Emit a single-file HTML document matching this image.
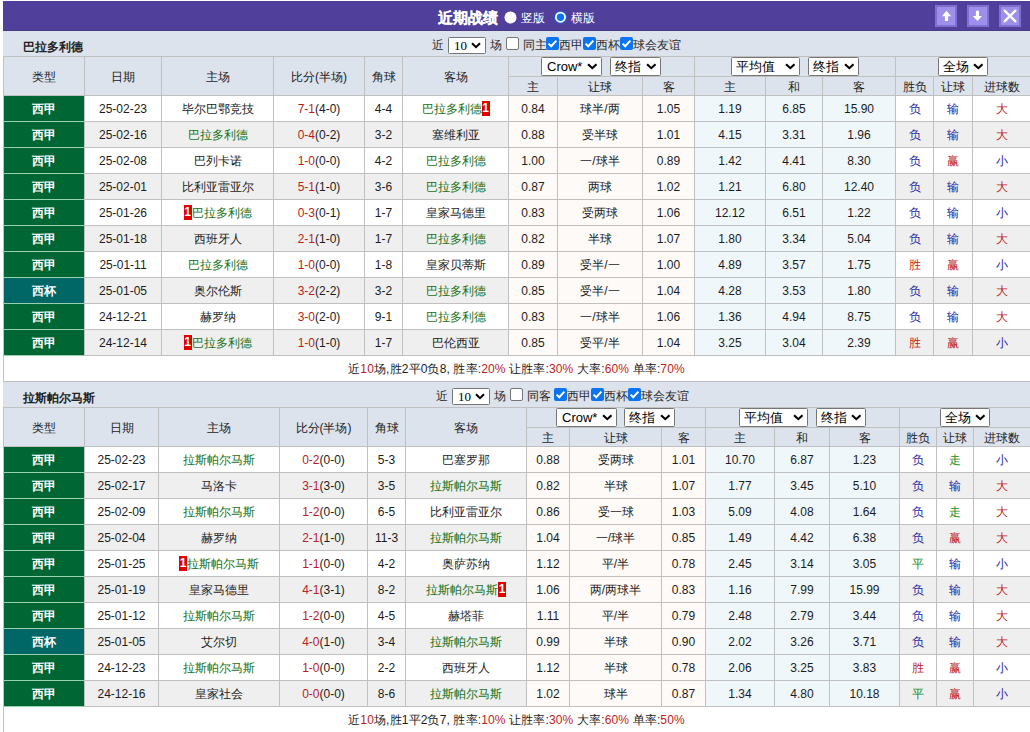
<!DOCTYPE html><html><head><meta charset="utf-8"><style>
*{margin:0;padding:0;box-sizing:content-box}
html,body{width:1030px;height:732px;overflow:hidden;background:#fff}
body{position:relative;font-family:"Liberation Sans",sans-serif;font-size:12px;color:#333}
.a{position:absolute}
.t{text-align:center;white-space:nowrap;overflow:visible}
.sel{background:#fff;border:1px solid #767676;border-radius:1.5px;color:#000;white-space:nowrap}
.sel .sl{position:absolute;left:5px;top:0}
.chev{position:absolute}
.cb{width:11px;height:11px;border:1px solid #767676;border-radius:2px;background:#fff}
.cb.on{width:13px;height:13px;border:none;background:#0b74f0}
.cb svg{position:absolute;left:0;top:0}
.btn{width:18px;height:18px;border:2px solid #7e6fd0;background:#9f8fec}
.rc{display:inline-block;position:relative;top:-1px;background:#e00000;color:#fff;font-weight:bold;width:8px;height:15px;line-height:15px;text-align:center;vertical-align:middle;font-size:12px}
</style></head><body><div class="a" style="left:3px;top:1px;width:1027px;height:30px;background:#51409b;"></div>
<div class="a" style="left:3px;top:30px;width:1027px;height:1px;background:#4a3c82;"></div>
<div class="a" style="left:3px;top:31px;width:1027px;height:1px;background:#e3e5f7;"></div>
<div class="a t" style="text-align:left;left:438px;top:2.5px;width:80px;height:30px;line-height:30px;font-size:15px;font-weight:bold;color:#fff;-webkit-text-stroke:0.2px #fff;">近期战绩</div>
<svg class="a" style="left:500px;top:8px" width="20" height="20" viewBox="0 0 20 20"><circle cx="10.5" cy="9.5" r="6" fill="#fff"/></svg>
<div class="a t" style="text-align:left;left:521px;top:2.5px;width:40px;height:30px;line-height:30px;font-size:12px;color:#fff;">竖版</div>
<svg class="a" style="left:550px;top:8px" width="20" height="20" viewBox="0 0 20 20"><circle cx="10.5" cy="9.2" r="6.4" fill="#1e5fd8"/><circle cx="10.5" cy="9.2" r="5.5" fill="#fff"/><circle cx="10.5" cy="9.2" r="3.7" fill="#0a74f5"/></svg>
<div class="a t" style="text-align:left;left:571px;top:2.5px;width:40px;height:30px;line-height:30px;font-size:12px;color:#fff;">横版</div>
<div class="a btn" style="left:935px;top:5px;"></div>
<div class="a btn" style="left:967px;top:5px;"></div>
<div class="a btn" style="left:999px;top:5px;"></div>
<svg class="a" style="left:935px;top:5px" width="22" height="22" viewBox="0 0 22 22"><path d="M6.9 11.3 L11.5 5.7 L16.1 11.3 L13.1 11.3 L13.1 16.1 L9.9 16.1 L9.9 11.3 Z" fill="#fff"/></svg>
<svg class="a" style="left:967px;top:5px" width="22" height="22" viewBox="0 0 22 22"><path d="M5.8 10.9 L10.4 16.1 L15 10.9 L12 10.9 L12 5.7 L8.9 5.7 L8.9 10.9 Z" fill="#fff"/></svg>
<svg class="a" style="left:999px;top:5px" width="22" height="22" viewBox="0 0 22 22"><path d="M5.6 5.6 L16.4 16.4 M16.4 5.6 L5.6 16.4" stroke="#fff" stroke-width="2.3" stroke-linecap="round"/></svg>
<div class="a" style="left:3px;top:31px;width:1027px;height:25px;background:#dce3ed;"></div>
<div class="a t" style="text-align:left;left:22.5px;top:35px;width:200px;height:25px;line-height:25px;font-size:12px;font-weight:bold;color:#222;">巴拉多利德</div>
<div class="a t" style="text-align:left;left:432px;top:31px;width:14px;height:25px;line-height:25px;font-size:12px;color:#2a2a2a;padding-top:3px;line-height:22px">近</div>
<div class="a sel" style="left:448px;top:37px;width:36px;height:15px;line-height:15px;font-size:13px;"><span class="sl" style="left:5px;top:0px;font-family:'Liberation Serif',serif;">10</span><svg class="chev" width="10" height="7" viewBox="0 0 10 7" preserveAspectRatio="none" style="right:4px;top:4.0px"><path d="M1 1.2 L5 5.2 L9 1.2" fill="none" stroke="#000" stroke-width="2"/></svg></div>
<div class="a t" style="text-align:left;left:490px;top:31px;width:14px;height:25px;line-height:25px;font-size:12px;color:#2a2a2a;padding-top:3px;line-height:22px">场</div>
<div class="a cb" style="left:506px;top:37px"></div>
<div class="a t" style="text-align:left;left:523px;top:31px;width:30px;height:25px;line-height:25px;font-size:12px;color:#2a2a2a;padding-top:3px;line-height:22px">同主</div>
<div class="a cb on" style="left:546px;top:37px"><svg width="13" height="13" viewBox="0 0 13 13"><path d="M2.6 6.6 L5.2 9.2 L10.4 3.6" fill="none" stroke="#fff" stroke-width="2"/></svg></div>
<div class="a t" style="text-align:left;left:559px;top:31px;width:30px;height:25px;line-height:25px;font-size:12px;color:#2a2a2a;padding-top:3px;line-height:22px">西甲</div>
<div class="a cb on" style="left:583px;top:37px"><svg width="13" height="13" viewBox="0 0 13 13"><path d="M2.6 6.6 L5.2 9.2 L10.4 3.6" fill="none" stroke="#fff" stroke-width="2"/></svg></div>
<div class="a t" style="text-align:left;left:596px;top:31px;width:30px;height:25px;line-height:25px;font-size:12px;color:#2a2a2a;padding-top:3px;line-height:22px">西杯</div>
<div class="a cb on" style="left:620px;top:37px"><svg width="13" height="13" viewBox="0 0 13 13"><path d="M2.6 6.6 L5.2 9.2 L10.4 3.6" fill="none" stroke="#fff" stroke-width="2"/></svg></div>
<div class="a t" style="text-align:left;left:633px;top:31px;width:60px;height:25px;line-height:25px;font-size:12px;color:#2a2a2a;padding-top:3px;line-height:22px">球会友谊</div>
<div class="a" style="left:3px;top:56px;width:1028px;height:326px;background:#c0c0c0;"></div>
<div class="a" style="left:4px;top:57px;width:80px;height:38px;background:#dce3ed;"></div>
<div class="a t" style="left:4px;top:58px;width:80px;height:38px;line-height:38px;color:#1c1c1c;">类型</div>
<div class="a" style="left:85px;top:57px;width:76px;height:38px;background:#dce3ed;"></div>
<div class="a t" style="left:85px;top:58px;width:76px;height:38px;line-height:38px;color:#1c1c1c;">日期</div>
<div class="a" style="left:162px;top:57px;width:111px;height:38px;background:#dce3ed;"></div>
<div class="a t" style="left:162px;top:58px;width:111px;height:38px;line-height:38px;color:#1c1c1c;">主场</div>
<div class="a" style="left:274px;top:57px;width:90px;height:38px;background:#dce3ed;"></div>
<div class="a t" style="left:274px;top:58px;width:90px;height:38px;line-height:38px;color:#1c1c1c;">比分(半场)</div>
<div class="a" style="left:365px;top:57px;width:37px;height:38px;background:#dce3ed;"></div>
<div class="a t" style="left:365px;top:58px;width:37px;height:38px;line-height:38px;color:#1c1c1c;">角球</div>
<div class="a" style="left:403px;top:57px;width:105px;height:38px;background:#dce3ed;"></div>
<div class="a t" style="left:403px;top:58px;width:105px;height:38px;line-height:38px;color:#1c1c1c;">客场</div>
<div class="a" style="left:509px;top:57px;width:185px;height:19px;background:#dce3ed;"></div>
<div class="a" style="left:695px;top:57px;width:200px;height:19px;background:#dce3ed;"></div>
<div class="a" style="left:896px;top:57px;width:134px;height:19px;background:#dce3ed;"></div>
<div class="a sel" style="left:541px;top:57px;width:59px;height:17px;line-height:17px;font-size:13px;"><span class="sl" style="left:5px;top:0px;">Crow*</span><svg class="chev" width="10.6" height="7" viewBox="0 0 10 7" preserveAspectRatio="none" style="right:3.6px;top:5.0px"><path d="M1 1.2 L5 5.2 L9 1.2" fill="none" stroke="#000" stroke-width="2"/></svg></div>
<div class="a sel" style="left:610px;top:57px;width:49px;height:17px;line-height:17px;font-size:13px;"><span class="sl" style="left:3.5px;top:0px;">终指</span><svg class="chev" width="10.6" height="7" viewBox="0 0 10 7" preserveAspectRatio="none" style="right:3.6px;top:5.0px"><path d="M1 1.2 L5 5.2 L9 1.2" fill="none" stroke="#000" stroke-width="2"/></svg></div>
<div class="a sel" style="left:731px;top:57px;width:67px;height:17px;line-height:17px;font-size:13px;"><span class="sl" style="left:3.5px;top:0px;">平均值</span><svg class="chev" width="10.6" height="7" viewBox="0 0 10 7" preserveAspectRatio="none" style="right:3.6px;top:5.0px"><path d="M1 1.2 L5 5.2 L9 1.2" fill="none" stroke="#000" stroke-width="2"/></svg></div>
<div class="a sel" style="left:808px;top:57px;width:49px;height:17px;line-height:17px;font-size:13px;"><span class="sl" style="left:3.5px;top:0px;">终指</span><svg class="chev" width="10.6" height="7" viewBox="0 0 10 7" preserveAspectRatio="none" style="right:3.6px;top:5.0px"><path d="M1 1.2 L5 5.2 L9 1.2" fill="none" stroke="#000" stroke-width="2"/></svg></div>
<div class="a sel" style="left:938px;top:57px;width:48px;height:17px;line-height:17px;font-size:13px;"><span class="sl" style="left:3.5px;top:0px;">全场</span><svg class="chev" width="10.6" height="7" viewBox="0 0 10 7" preserveAspectRatio="none" style="right:3.6px;top:5.0px"><path d="M1 1.2 L5 5.2 L9 1.2" fill="none" stroke="#000" stroke-width="2"/></svg></div>
<div class="a" style="left:509px;top:77px;width:48px;height:18px;background:#dce3ed;"></div>
<div class="a t" style="left:509px;top:78px;width:48px;height:18px;line-height:18px;color:#1c1c1c;">主</div>
<div class="a" style="left:558px;top:77px;width:84px;height:18px;background:#dce3ed;"></div>
<div class="a t" style="left:558px;top:78px;width:84px;height:18px;line-height:18px;color:#1c1c1c;">让球</div>
<div class="a" style="left:643px;top:77px;width:51px;height:18px;background:#dce3ed;"></div>
<div class="a t" style="left:643px;top:78px;width:51px;height:18px;line-height:18px;color:#1c1c1c;">客</div>
<div class="a" style="left:695px;top:77px;width:70px;height:18px;background:#dce3ed;"></div>
<div class="a t" style="left:695px;top:78px;width:70px;height:18px;line-height:18px;color:#1c1c1c;">主</div>
<div class="a" style="left:766px;top:77px;width:56px;height:18px;background:#dce3ed;"></div>
<div class="a t" style="left:766px;top:78px;width:56px;height:18px;line-height:18px;color:#1c1c1c;">和</div>
<div class="a" style="left:823px;top:77px;width:72px;height:18px;background:#dce3ed;"></div>
<div class="a t" style="left:823px;top:78px;width:72px;height:18px;line-height:18px;color:#1c1c1c;">客</div>
<div class="a" style="left:896px;top:77px;width:37px;height:18px;background:#dce3ed;"></div>
<div class="a t" style="left:896px;top:78px;width:37px;height:18px;line-height:18px;color:#1c1c1c;">胜负</div>
<div class="a" style="left:934px;top:77px;width:38px;height:18px;background:#dce3ed;"></div>
<div class="a t" style="left:934px;top:78px;width:38px;height:18px;line-height:18px;color:#1c1c1c;">让球</div>
<div class="a" style="left:973px;top:77px;width:57px;height:18px;background:#dce3ed;"></div>
<div class="a t" style="left:973px;top:78px;width:57px;height:18px;line-height:18px;color:#1c1c1c;">进球数</div>
<div class="a" style="left:4px;top:96px;width:80px;height:25px;background:#006633;"></div>
<div class="a t" style="left:4px;top:97px;width:80px;height:25px;line-height:25px;color:#fff;font-weight:bold;">西甲</div>
<div class="a" style="left:85px;top:96px;width:76px;height:25px;background:#ffffff;"></div>
<div class="a t" style="left:85px;top:97px;width:76px;height:25px;line-height:25px;color:#1c1c1c;">25-02-23</div>
<div class="a" style="left:162px;top:96px;width:111px;height:25px;background:#ffffff;"></div>
<div class="a t" style="left:162px;top:97px;width:111px;height:25px;line-height:25px;color:#1c1c1c;">毕尔巴鄂竞技</div>
<div class="a" style="left:274px;top:96px;width:90px;height:25px;background:#ffffff;"></div>
<div class="a t" style="left:274px;top:97px;width:90px;height:25px;line-height:25px;color:#1c1c1c;"><span style="color:#bf1c1c">7-1</span>(4-0)</div>
<div class="a" style="left:365px;top:96px;width:37px;height:25px;background:#ffffff;"></div>
<div class="a t" style="left:365px;top:97px;width:37px;height:25px;line-height:25px;color:#1c1c1c;">4-4</div>
<div class="a" style="left:403px;top:96px;width:105px;height:25px;background:#ffffff;"></div>
<div class="a t" style="left:403px;top:97px;width:105px;height:25px;line-height:25px;color:#1c1c1c;"><span style="color:#177217">巴拉多利德</span><span class="rc">1</span></div>
<div class="a" style="left:509px;top:96px;width:48px;height:25px;background:#fefaf7;"></div>
<div class="a t" style="left:509px;top:97px;width:48px;height:25px;line-height:25px;color:#1c1c1c;">0.84</div>
<div class="a" style="left:558px;top:96px;width:84px;height:25px;background:#fefaf7;"></div>
<div class="a t" style="left:558px;top:97px;width:84px;height:25px;line-height:25px;color:#1c1c1c;">球半/两</div>
<div class="a" style="left:643px;top:96px;width:51px;height:25px;background:#fefaf7;"></div>
<div class="a t" style="left:643px;top:97px;width:51px;height:25px;line-height:25px;color:#1c1c1c;">1.05</div>
<div class="a" style="left:695px;top:96px;width:70px;height:25px;background:#eff7fb;"></div>
<div class="a t" style="left:695px;top:97px;width:70px;height:25px;line-height:25px;color:#1c1c1c;">1.19</div>
<div class="a" style="left:766px;top:96px;width:56px;height:25px;background:#eff7fb;"></div>
<div class="a t" style="left:766px;top:97px;width:56px;height:25px;line-height:25px;color:#1c1c1c;">6.85</div>
<div class="a" style="left:823px;top:96px;width:72px;height:25px;background:#eff7fb;"></div>
<div class="a t" style="left:823px;top:97px;width:72px;height:25px;line-height:25px;color:#1c1c1c;">15.90</div>
<div class="a" style="left:896px;top:96px;width:37px;height:25px;background:#ffffff;"></div>
<div class="a t" style="left:896px;top:97px;width:37px;height:25px;line-height:25px;color:#1f1fa6;">负</div>
<div class="a" style="left:934px;top:96px;width:38px;height:25px;background:#ffffff;"></div>
<div class="a t" style="left:934px;top:97px;width:38px;height:25px;line-height:25px;color:#1f1fa6;">输</div>
<div class="a" style="left:973px;top:96px;width:57px;height:25px;background:#ffffff;"></div>
<div class="a t" style="left:973px;top:97px;width:57px;height:25px;line-height:25px;color:#bf1c1c;">大</div>
<div class="a" style="left:4px;top:121px;width:80px;height:1px;background:#98d2ac;"></div>
<div class="a" style="left:4px;top:122px;width:80px;height:25px;background:#006633;"></div>
<div class="a t" style="left:4px;top:123px;width:80px;height:25px;line-height:25px;color:#fff;font-weight:bold;">西甲</div>
<div class="a" style="left:85px;top:122px;width:76px;height:25px;background:#efefef;"></div>
<div class="a t" style="left:85px;top:123px;width:76px;height:25px;line-height:25px;color:#1c1c1c;">25-02-16</div>
<div class="a" style="left:162px;top:122px;width:111px;height:25px;background:#efefef;"></div>
<div class="a t" style="left:162px;top:123px;width:111px;height:25px;line-height:25px;color:#1c1c1c;"><span style="color:#177217">巴拉多利德</span></div>
<div class="a" style="left:274px;top:122px;width:90px;height:25px;background:#efefef;"></div>
<div class="a t" style="left:274px;top:123px;width:90px;height:25px;line-height:25px;color:#1c1c1c;"><span style="color:#bf1c1c">0-4</span>(0-2)</div>
<div class="a" style="left:365px;top:122px;width:37px;height:25px;background:#efefef;"></div>
<div class="a t" style="left:365px;top:123px;width:37px;height:25px;line-height:25px;color:#1c1c1c;">3-2</div>
<div class="a" style="left:403px;top:122px;width:105px;height:25px;background:#efefef;"></div>
<div class="a t" style="left:403px;top:123px;width:105px;height:25px;line-height:25px;color:#1c1c1c;">塞维利亚</div>
<div class="a" style="left:509px;top:122px;width:48px;height:25px;background:#fefaf7;"></div>
<div class="a t" style="left:509px;top:123px;width:48px;height:25px;line-height:25px;color:#1c1c1c;">0.88</div>
<div class="a" style="left:558px;top:122px;width:84px;height:25px;background:#fefaf7;"></div>
<div class="a t" style="left:558px;top:123px;width:84px;height:25px;line-height:25px;color:#1c1c1c;">受半球</div>
<div class="a" style="left:643px;top:122px;width:51px;height:25px;background:#fefaf7;"></div>
<div class="a t" style="left:643px;top:123px;width:51px;height:25px;line-height:25px;color:#1c1c1c;">1.01</div>
<div class="a" style="left:695px;top:122px;width:70px;height:25px;background:#eff7fb;"></div>
<div class="a t" style="left:695px;top:123px;width:70px;height:25px;line-height:25px;color:#1c1c1c;">4.15</div>
<div class="a" style="left:766px;top:122px;width:56px;height:25px;background:#eff7fb;"></div>
<div class="a t" style="left:766px;top:123px;width:56px;height:25px;line-height:25px;color:#1c1c1c;">3.31</div>
<div class="a" style="left:823px;top:122px;width:72px;height:25px;background:#eff7fb;"></div>
<div class="a t" style="left:823px;top:123px;width:72px;height:25px;line-height:25px;color:#1c1c1c;">1.96</div>
<div class="a" style="left:896px;top:122px;width:37px;height:25px;background:#efefef;"></div>
<div class="a t" style="left:896px;top:123px;width:37px;height:25px;line-height:25px;color:#1f1fa6;">负</div>
<div class="a" style="left:934px;top:122px;width:38px;height:25px;background:#efefef;"></div>
<div class="a t" style="left:934px;top:123px;width:38px;height:25px;line-height:25px;color:#1f1fa6;">输</div>
<div class="a" style="left:973px;top:122px;width:57px;height:25px;background:#efefef;"></div>
<div class="a t" style="left:973px;top:123px;width:57px;height:25px;line-height:25px;color:#bf1c1c;">大</div>
<div class="a" style="left:4px;top:147px;width:80px;height:1px;background:#98d2ac;"></div>
<div class="a" style="left:4px;top:148px;width:80px;height:25px;background:#006633;"></div>
<div class="a t" style="left:4px;top:149px;width:80px;height:25px;line-height:25px;color:#fff;font-weight:bold;">西甲</div>
<div class="a" style="left:85px;top:148px;width:76px;height:25px;background:#ffffff;"></div>
<div class="a t" style="left:85px;top:149px;width:76px;height:25px;line-height:25px;color:#1c1c1c;">25-02-08</div>
<div class="a" style="left:162px;top:148px;width:111px;height:25px;background:#ffffff;"></div>
<div class="a t" style="left:162px;top:149px;width:111px;height:25px;line-height:25px;color:#1c1c1c;">巴列卡诺</div>
<div class="a" style="left:274px;top:148px;width:90px;height:25px;background:#ffffff;"></div>
<div class="a t" style="left:274px;top:149px;width:90px;height:25px;line-height:25px;color:#1c1c1c;"><span style="color:#bf1c1c">1-0</span>(0-0)</div>
<div class="a" style="left:365px;top:148px;width:37px;height:25px;background:#ffffff;"></div>
<div class="a t" style="left:365px;top:149px;width:37px;height:25px;line-height:25px;color:#1c1c1c;">4-2</div>
<div class="a" style="left:403px;top:148px;width:105px;height:25px;background:#ffffff;"></div>
<div class="a t" style="left:403px;top:149px;width:105px;height:25px;line-height:25px;color:#1c1c1c;"><span style="color:#177217">巴拉多利德</span></div>
<div class="a" style="left:509px;top:148px;width:48px;height:25px;background:#fefaf7;"></div>
<div class="a t" style="left:509px;top:149px;width:48px;height:25px;line-height:25px;color:#1c1c1c;">1.00</div>
<div class="a" style="left:558px;top:148px;width:84px;height:25px;background:#fefaf7;"></div>
<div class="a t" style="left:558px;top:149px;width:84px;height:25px;line-height:25px;color:#1c1c1c;">一/球半</div>
<div class="a" style="left:643px;top:148px;width:51px;height:25px;background:#fefaf7;"></div>
<div class="a t" style="left:643px;top:149px;width:51px;height:25px;line-height:25px;color:#1c1c1c;">0.89</div>
<div class="a" style="left:695px;top:148px;width:70px;height:25px;background:#eff7fb;"></div>
<div class="a t" style="left:695px;top:149px;width:70px;height:25px;line-height:25px;color:#1c1c1c;">1.42</div>
<div class="a" style="left:766px;top:148px;width:56px;height:25px;background:#eff7fb;"></div>
<div class="a t" style="left:766px;top:149px;width:56px;height:25px;line-height:25px;color:#1c1c1c;">4.41</div>
<div class="a" style="left:823px;top:148px;width:72px;height:25px;background:#eff7fb;"></div>
<div class="a t" style="left:823px;top:149px;width:72px;height:25px;line-height:25px;color:#1c1c1c;">8.30</div>
<div class="a" style="left:896px;top:148px;width:37px;height:25px;background:#ffffff;"></div>
<div class="a t" style="left:896px;top:149px;width:37px;height:25px;line-height:25px;color:#1f1fa6;">负</div>
<div class="a" style="left:934px;top:148px;width:38px;height:25px;background:#ffffff;"></div>
<div class="a t" style="left:934px;top:149px;width:38px;height:25px;line-height:25px;color:#bf1c1c;">赢</div>
<div class="a" style="left:973px;top:148px;width:57px;height:25px;background:#ffffff;"></div>
<div class="a t" style="left:973px;top:149px;width:57px;height:25px;line-height:25px;color:#1f1fa6;">小</div>
<div class="a" style="left:4px;top:173px;width:80px;height:1px;background:#98d2ac;"></div>
<div class="a" style="left:4px;top:174px;width:80px;height:25px;background:#006633;"></div>
<div class="a t" style="left:4px;top:175px;width:80px;height:25px;line-height:25px;color:#fff;font-weight:bold;">西甲</div>
<div class="a" style="left:85px;top:174px;width:76px;height:25px;background:#efefef;"></div>
<div class="a t" style="left:85px;top:175px;width:76px;height:25px;line-height:25px;color:#1c1c1c;">25-02-01</div>
<div class="a" style="left:162px;top:174px;width:111px;height:25px;background:#efefef;"></div>
<div class="a t" style="left:162px;top:175px;width:111px;height:25px;line-height:25px;color:#1c1c1c;">比利亚雷亚尔</div>
<div class="a" style="left:274px;top:174px;width:90px;height:25px;background:#efefef;"></div>
<div class="a t" style="left:274px;top:175px;width:90px;height:25px;line-height:25px;color:#1c1c1c;"><span style="color:#bf1c1c">5-1</span>(1-0)</div>
<div class="a" style="left:365px;top:174px;width:37px;height:25px;background:#efefef;"></div>
<div class="a t" style="left:365px;top:175px;width:37px;height:25px;line-height:25px;color:#1c1c1c;">3-6</div>
<div class="a" style="left:403px;top:174px;width:105px;height:25px;background:#efefef;"></div>
<div class="a t" style="left:403px;top:175px;width:105px;height:25px;line-height:25px;color:#1c1c1c;"><span style="color:#177217">巴拉多利德</span></div>
<div class="a" style="left:509px;top:174px;width:48px;height:25px;background:#fefaf7;"></div>
<div class="a t" style="left:509px;top:175px;width:48px;height:25px;line-height:25px;color:#1c1c1c;">0.87</div>
<div class="a" style="left:558px;top:174px;width:84px;height:25px;background:#fefaf7;"></div>
<div class="a t" style="left:558px;top:175px;width:84px;height:25px;line-height:25px;color:#1c1c1c;">两球</div>
<div class="a" style="left:643px;top:174px;width:51px;height:25px;background:#fefaf7;"></div>
<div class="a t" style="left:643px;top:175px;width:51px;height:25px;line-height:25px;color:#1c1c1c;">1.02</div>
<div class="a" style="left:695px;top:174px;width:70px;height:25px;background:#eff7fb;"></div>
<div class="a t" style="left:695px;top:175px;width:70px;height:25px;line-height:25px;color:#1c1c1c;">1.21</div>
<div class="a" style="left:766px;top:174px;width:56px;height:25px;background:#eff7fb;"></div>
<div class="a t" style="left:766px;top:175px;width:56px;height:25px;line-height:25px;color:#1c1c1c;">6.80</div>
<div class="a" style="left:823px;top:174px;width:72px;height:25px;background:#eff7fb;"></div>
<div class="a t" style="left:823px;top:175px;width:72px;height:25px;line-height:25px;color:#1c1c1c;">12.40</div>
<div class="a" style="left:896px;top:174px;width:37px;height:25px;background:#efefef;"></div>
<div class="a t" style="left:896px;top:175px;width:37px;height:25px;line-height:25px;color:#1f1fa6;">负</div>
<div class="a" style="left:934px;top:174px;width:38px;height:25px;background:#efefef;"></div>
<div class="a t" style="left:934px;top:175px;width:38px;height:25px;line-height:25px;color:#1f1fa6;">输</div>
<div class="a" style="left:973px;top:174px;width:57px;height:25px;background:#efefef;"></div>
<div class="a t" style="left:973px;top:175px;width:57px;height:25px;line-height:25px;color:#bf1c1c;">大</div>
<div class="a" style="left:4px;top:199px;width:80px;height:1px;background:#98d2ac;"></div>
<div class="a" style="left:4px;top:200px;width:80px;height:25px;background:#006633;"></div>
<div class="a t" style="left:4px;top:201px;width:80px;height:25px;line-height:25px;color:#fff;font-weight:bold;">西甲</div>
<div class="a" style="left:85px;top:200px;width:76px;height:25px;background:#ffffff;"></div>
<div class="a t" style="left:85px;top:201px;width:76px;height:25px;line-height:25px;color:#1c1c1c;">25-01-26</div>
<div class="a" style="left:162px;top:200px;width:111px;height:25px;background:#ffffff;"></div>
<div class="a t" style="left:162px;top:201px;width:111px;height:25px;line-height:25px;color:#1c1c1c;"><span class="rc">1</span><span style="color:#177217">巴拉多利德</span></div>
<div class="a" style="left:274px;top:200px;width:90px;height:25px;background:#ffffff;"></div>
<div class="a t" style="left:274px;top:201px;width:90px;height:25px;line-height:25px;color:#1c1c1c;"><span style="color:#bf1c1c">0-3</span>(0-1)</div>
<div class="a" style="left:365px;top:200px;width:37px;height:25px;background:#ffffff;"></div>
<div class="a t" style="left:365px;top:201px;width:37px;height:25px;line-height:25px;color:#1c1c1c;">1-7</div>
<div class="a" style="left:403px;top:200px;width:105px;height:25px;background:#ffffff;"></div>
<div class="a t" style="left:403px;top:201px;width:105px;height:25px;line-height:25px;color:#1c1c1c;">皇家马德里</div>
<div class="a" style="left:509px;top:200px;width:48px;height:25px;background:#fefaf7;"></div>
<div class="a t" style="left:509px;top:201px;width:48px;height:25px;line-height:25px;color:#1c1c1c;">0.83</div>
<div class="a" style="left:558px;top:200px;width:84px;height:25px;background:#fefaf7;"></div>
<div class="a t" style="left:558px;top:201px;width:84px;height:25px;line-height:25px;color:#1c1c1c;">受两球</div>
<div class="a" style="left:643px;top:200px;width:51px;height:25px;background:#fefaf7;"></div>
<div class="a t" style="left:643px;top:201px;width:51px;height:25px;line-height:25px;color:#1c1c1c;">1.06</div>
<div class="a" style="left:695px;top:200px;width:70px;height:25px;background:#eff7fb;"></div>
<div class="a t" style="left:695px;top:201px;width:70px;height:25px;line-height:25px;color:#1c1c1c;">12.12</div>
<div class="a" style="left:766px;top:200px;width:56px;height:25px;background:#eff7fb;"></div>
<div class="a t" style="left:766px;top:201px;width:56px;height:25px;line-height:25px;color:#1c1c1c;">6.51</div>
<div class="a" style="left:823px;top:200px;width:72px;height:25px;background:#eff7fb;"></div>
<div class="a t" style="left:823px;top:201px;width:72px;height:25px;line-height:25px;color:#1c1c1c;">1.22</div>
<div class="a" style="left:896px;top:200px;width:37px;height:25px;background:#ffffff;"></div>
<div class="a t" style="left:896px;top:201px;width:37px;height:25px;line-height:25px;color:#1f1fa6;">负</div>
<div class="a" style="left:934px;top:200px;width:38px;height:25px;background:#ffffff;"></div>
<div class="a t" style="left:934px;top:201px;width:38px;height:25px;line-height:25px;color:#1f1fa6;">输</div>
<div class="a" style="left:973px;top:200px;width:57px;height:25px;background:#ffffff;"></div>
<div class="a t" style="left:973px;top:201px;width:57px;height:25px;line-height:25px;color:#1f1fa6;">小</div>
<div class="a" style="left:4px;top:225px;width:80px;height:1px;background:#98d2ac;"></div>
<div class="a" style="left:4px;top:226px;width:80px;height:25px;background:#006633;"></div>
<div class="a t" style="left:4px;top:227px;width:80px;height:25px;line-height:25px;color:#fff;font-weight:bold;">西甲</div>
<div class="a" style="left:85px;top:226px;width:76px;height:25px;background:#efefef;"></div>
<div class="a t" style="left:85px;top:227px;width:76px;height:25px;line-height:25px;color:#1c1c1c;">25-01-18</div>
<div class="a" style="left:162px;top:226px;width:111px;height:25px;background:#efefef;"></div>
<div class="a t" style="left:162px;top:227px;width:111px;height:25px;line-height:25px;color:#1c1c1c;">西班牙人</div>
<div class="a" style="left:274px;top:226px;width:90px;height:25px;background:#efefef;"></div>
<div class="a t" style="left:274px;top:227px;width:90px;height:25px;line-height:25px;color:#1c1c1c;"><span style="color:#bf1c1c">2-1</span>(1-0)</div>
<div class="a" style="left:365px;top:226px;width:37px;height:25px;background:#efefef;"></div>
<div class="a t" style="left:365px;top:227px;width:37px;height:25px;line-height:25px;color:#1c1c1c;">1-7</div>
<div class="a" style="left:403px;top:226px;width:105px;height:25px;background:#efefef;"></div>
<div class="a t" style="left:403px;top:227px;width:105px;height:25px;line-height:25px;color:#1c1c1c;"><span style="color:#177217">巴拉多利德</span></div>
<div class="a" style="left:509px;top:226px;width:48px;height:25px;background:#fefaf7;"></div>
<div class="a t" style="left:509px;top:227px;width:48px;height:25px;line-height:25px;color:#1c1c1c;">0.82</div>
<div class="a" style="left:558px;top:226px;width:84px;height:25px;background:#fefaf7;"></div>
<div class="a t" style="left:558px;top:227px;width:84px;height:25px;line-height:25px;color:#1c1c1c;">半球</div>
<div class="a" style="left:643px;top:226px;width:51px;height:25px;background:#fefaf7;"></div>
<div class="a t" style="left:643px;top:227px;width:51px;height:25px;line-height:25px;color:#1c1c1c;">1.07</div>
<div class="a" style="left:695px;top:226px;width:70px;height:25px;background:#eff7fb;"></div>
<div class="a t" style="left:695px;top:227px;width:70px;height:25px;line-height:25px;color:#1c1c1c;">1.80</div>
<div class="a" style="left:766px;top:226px;width:56px;height:25px;background:#eff7fb;"></div>
<div class="a t" style="left:766px;top:227px;width:56px;height:25px;line-height:25px;color:#1c1c1c;">3.34</div>
<div class="a" style="left:823px;top:226px;width:72px;height:25px;background:#eff7fb;"></div>
<div class="a t" style="left:823px;top:227px;width:72px;height:25px;line-height:25px;color:#1c1c1c;">5.04</div>
<div class="a" style="left:896px;top:226px;width:37px;height:25px;background:#efefef;"></div>
<div class="a t" style="left:896px;top:227px;width:37px;height:25px;line-height:25px;color:#1f1fa6;">负</div>
<div class="a" style="left:934px;top:226px;width:38px;height:25px;background:#efefef;"></div>
<div class="a t" style="left:934px;top:227px;width:38px;height:25px;line-height:25px;color:#1f1fa6;">输</div>
<div class="a" style="left:973px;top:226px;width:57px;height:25px;background:#efefef;"></div>
<div class="a t" style="left:973px;top:227px;width:57px;height:25px;line-height:25px;color:#bf1c1c;">大</div>
<div class="a" style="left:4px;top:251px;width:80px;height:1px;background:#98d2ac;"></div>
<div class="a" style="left:4px;top:252px;width:80px;height:25px;background:#006633;"></div>
<div class="a t" style="left:4px;top:253px;width:80px;height:25px;line-height:25px;color:#fff;font-weight:bold;">西甲</div>
<div class="a" style="left:85px;top:252px;width:76px;height:25px;background:#ffffff;"></div>
<div class="a t" style="left:85px;top:253px;width:76px;height:25px;line-height:25px;color:#1c1c1c;">25-01-11</div>
<div class="a" style="left:162px;top:252px;width:111px;height:25px;background:#ffffff;"></div>
<div class="a t" style="left:162px;top:253px;width:111px;height:25px;line-height:25px;color:#1c1c1c;"><span style="color:#177217">巴拉多利德</span></div>
<div class="a" style="left:274px;top:252px;width:90px;height:25px;background:#ffffff;"></div>
<div class="a t" style="left:274px;top:253px;width:90px;height:25px;line-height:25px;color:#1c1c1c;"><span style="color:#bf1c1c">1-0</span>(0-0)</div>
<div class="a" style="left:365px;top:252px;width:37px;height:25px;background:#ffffff;"></div>
<div class="a t" style="left:365px;top:253px;width:37px;height:25px;line-height:25px;color:#1c1c1c;">1-8</div>
<div class="a" style="left:403px;top:252px;width:105px;height:25px;background:#ffffff;"></div>
<div class="a t" style="left:403px;top:253px;width:105px;height:25px;line-height:25px;color:#1c1c1c;">皇家贝蒂斯</div>
<div class="a" style="left:509px;top:252px;width:48px;height:25px;background:#fefaf7;"></div>
<div class="a t" style="left:509px;top:253px;width:48px;height:25px;line-height:25px;color:#1c1c1c;">0.89</div>
<div class="a" style="left:558px;top:252px;width:84px;height:25px;background:#fefaf7;"></div>
<div class="a t" style="left:558px;top:253px;width:84px;height:25px;line-height:25px;color:#1c1c1c;">受半/一</div>
<div class="a" style="left:643px;top:252px;width:51px;height:25px;background:#fefaf7;"></div>
<div class="a t" style="left:643px;top:253px;width:51px;height:25px;line-height:25px;color:#1c1c1c;">1.00</div>
<div class="a" style="left:695px;top:252px;width:70px;height:25px;background:#eff7fb;"></div>
<div class="a t" style="left:695px;top:253px;width:70px;height:25px;line-height:25px;color:#1c1c1c;">4.89</div>
<div class="a" style="left:766px;top:252px;width:56px;height:25px;background:#eff7fb;"></div>
<div class="a t" style="left:766px;top:253px;width:56px;height:25px;line-height:25px;color:#1c1c1c;">3.57</div>
<div class="a" style="left:823px;top:252px;width:72px;height:25px;background:#eff7fb;"></div>
<div class="a t" style="left:823px;top:253px;width:72px;height:25px;line-height:25px;color:#1c1c1c;">1.75</div>
<div class="a" style="left:896px;top:252px;width:37px;height:25px;background:#ffffff;"></div>
<div class="a t" style="left:896px;top:253px;width:37px;height:25px;line-height:25px;color:#bf1c1c;">胜</div>
<div class="a" style="left:934px;top:252px;width:38px;height:25px;background:#ffffff;"></div>
<div class="a t" style="left:934px;top:253px;width:38px;height:25px;line-height:25px;color:#bf1c1c;">赢</div>
<div class="a" style="left:973px;top:252px;width:57px;height:25px;background:#ffffff;"></div>
<div class="a t" style="left:973px;top:253px;width:57px;height:25px;line-height:25px;color:#1f1fa6;">小</div>
<div class="a" style="left:4px;top:277px;width:80px;height:1px;background:#98d2ac;"></div>
<div class="a" style="left:4px;top:278px;width:80px;height:25px;background:#006666;"></div>
<div class="a t" style="left:4px;top:279px;width:80px;height:25px;line-height:25px;color:#fff;font-weight:bold;">西杯</div>
<div class="a" style="left:85px;top:278px;width:76px;height:25px;background:#efefef;"></div>
<div class="a t" style="left:85px;top:279px;width:76px;height:25px;line-height:25px;color:#1c1c1c;">25-01-05</div>
<div class="a" style="left:162px;top:278px;width:111px;height:25px;background:#efefef;"></div>
<div class="a t" style="left:162px;top:279px;width:111px;height:25px;line-height:25px;color:#1c1c1c;">奥尔伦斯</div>
<div class="a" style="left:274px;top:278px;width:90px;height:25px;background:#efefef;"></div>
<div class="a t" style="left:274px;top:279px;width:90px;height:25px;line-height:25px;color:#1c1c1c;"><span style="color:#bf1c1c">3-2</span>(2-2)</div>
<div class="a" style="left:365px;top:278px;width:37px;height:25px;background:#efefef;"></div>
<div class="a t" style="left:365px;top:279px;width:37px;height:25px;line-height:25px;color:#1c1c1c;">3-2</div>
<div class="a" style="left:403px;top:278px;width:105px;height:25px;background:#efefef;"></div>
<div class="a t" style="left:403px;top:279px;width:105px;height:25px;line-height:25px;color:#1c1c1c;"><span style="color:#177217">巴拉多利德</span></div>
<div class="a" style="left:509px;top:278px;width:48px;height:25px;background:#fefaf7;"></div>
<div class="a t" style="left:509px;top:279px;width:48px;height:25px;line-height:25px;color:#1c1c1c;">0.85</div>
<div class="a" style="left:558px;top:278px;width:84px;height:25px;background:#fefaf7;"></div>
<div class="a t" style="left:558px;top:279px;width:84px;height:25px;line-height:25px;color:#1c1c1c;">受半/一</div>
<div class="a" style="left:643px;top:278px;width:51px;height:25px;background:#fefaf7;"></div>
<div class="a t" style="left:643px;top:279px;width:51px;height:25px;line-height:25px;color:#1c1c1c;">1.04</div>
<div class="a" style="left:695px;top:278px;width:70px;height:25px;background:#eff7fb;"></div>
<div class="a t" style="left:695px;top:279px;width:70px;height:25px;line-height:25px;color:#1c1c1c;">4.28</div>
<div class="a" style="left:766px;top:278px;width:56px;height:25px;background:#eff7fb;"></div>
<div class="a t" style="left:766px;top:279px;width:56px;height:25px;line-height:25px;color:#1c1c1c;">3.53</div>
<div class="a" style="left:823px;top:278px;width:72px;height:25px;background:#eff7fb;"></div>
<div class="a t" style="left:823px;top:279px;width:72px;height:25px;line-height:25px;color:#1c1c1c;">1.80</div>
<div class="a" style="left:896px;top:278px;width:37px;height:25px;background:#efefef;"></div>
<div class="a t" style="left:896px;top:279px;width:37px;height:25px;line-height:25px;color:#1f1fa6;">负</div>
<div class="a" style="left:934px;top:278px;width:38px;height:25px;background:#efefef;"></div>
<div class="a t" style="left:934px;top:279px;width:38px;height:25px;line-height:25px;color:#1f1fa6;">输</div>
<div class="a" style="left:973px;top:278px;width:57px;height:25px;background:#efefef;"></div>
<div class="a t" style="left:973px;top:279px;width:57px;height:25px;line-height:25px;color:#bf1c1c;">大</div>
<div class="a" style="left:4px;top:303px;width:80px;height:1px;background:#98d2ac;"></div>
<div class="a" style="left:4px;top:304px;width:80px;height:25px;background:#006633;"></div>
<div class="a t" style="left:4px;top:305px;width:80px;height:25px;line-height:25px;color:#fff;font-weight:bold;">西甲</div>
<div class="a" style="left:85px;top:304px;width:76px;height:25px;background:#ffffff;"></div>
<div class="a t" style="left:85px;top:305px;width:76px;height:25px;line-height:25px;color:#1c1c1c;">24-12-21</div>
<div class="a" style="left:162px;top:304px;width:111px;height:25px;background:#ffffff;"></div>
<div class="a t" style="left:162px;top:305px;width:111px;height:25px;line-height:25px;color:#1c1c1c;">赫罗纳</div>
<div class="a" style="left:274px;top:304px;width:90px;height:25px;background:#ffffff;"></div>
<div class="a t" style="left:274px;top:305px;width:90px;height:25px;line-height:25px;color:#1c1c1c;"><span style="color:#bf1c1c">3-0</span>(2-0)</div>
<div class="a" style="left:365px;top:304px;width:37px;height:25px;background:#ffffff;"></div>
<div class="a t" style="left:365px;top:305px;width:37px;height:25px;line-height:25px;color:#1c1c1c;">9-1</div>
<div class="a" style="left:403px;top:304px;width:105px;height:25px;background:#ffffff;"></div>
<div class="a t" style="left:403px;top:305px;width:105px;height:25px;line-height:25px;color:#1c1c1c;"><span style="color:#177217">巴拉多利德</span></div>
<div class="a" style="left:509px;top:304px;width:48px;height:25px;background:#fefaf7;"></div>
<div class="a t" style="left:509px;top:305px;width:48px;height:25px;line-height:25px;color:#1c1c1c;">0.83</div>
<div class="a" style="left:558px;top:304px;width:84px;height:25px;background:#fefaf7;"></div>
<div class="a t" style="left:558px;top:305px;width:84px;height:25px;line-height:25px;color:#1c1c1c;">一/球半</div>
<div class="a" style="left:643px;top:304px;width:51px;height:25px;background:#fefaf7;"></div>
<div class="a t" style="left:643px;top:305px;width:51px;height:25px;line-height:25px;color:#1c1c1c;">1.06</div>
<div class="a" style="left:695px;top:304px;width:70px;height:25px;background:#eff7fb;"></div>
<div class="a t" style="left:695px;top:305px;width:70px;height:25px;line-height:25px;color:#1c1c1c;">1.36</div>
<div class="a" style="left:766px;top:304px;width:56px;height:25px;background:#eff7fb;"></div>
<div class="a t" style="left:766px;top:305px;width:56px;height:25px;line-height:25px;color:#1c1c1c;">4.94</div>
<div class="a" style="left:823px;top:304px;width:72px;height:25px;background:#eff7fb;"></div>
<div class="a t" style="left:823px;top:305px;width:72px;height:25px;line-height:25px;color:#1c1c1c;">8.75</div>
<div class="a" style="left:896px;top:304px;width:37px;height:25px;background:#ffffff;"></div>
<div class="a t" style="left:896px;top:305px;width:37px;height:25px;line-height:25px;color:#1f1fa6;">负</div>
<div class="a" style="left:934px;top:304px;width:38px;height:25px;background:#ffffff;"></div>
<div class="a t" style="left:934px;top:305px;width:38px;height:25px;line-height:25px;color:#1f1fa6;">输</div>
<div class="a" style="left:973px;top:304px;width:57px;height:25px;background:#ffffff;"></div>
<div class="a t" style="left:973px;top:305px;width:57px;height:25px;line-height:25px;color:#bf1c1c;">大</div>
<div class="a" style="left:4px;top:329px;width:80px;height:1px;background:#98d2ac;"></div>
<div class="a" style="left:4px;top:330px;width:80px;height:25px;background:#006633;"></div>
<div class="a t" style="left:4px;top:331px;width:80px;height:25px;line-height:25px;color:#fff;font-weight:bold;">西甲</div>
<div class="a" style="left:85px;top:330px;width:76px;height:25px;background:#efefef;"></div>
<div class="a t" style="left:85px;top:331px;width:76px;height:25px;line-height:25px;color:#1c1c1c;">24-12-14</div>
<div class="a" style="left:162px;top:330px;width:111px;height:25px;background:#efefef;"></div>
<div class="a t" style="left:162px;top:331px;width:111px;height:25px;line-height:25px;color:#1c1c1c;"><span class="rc">1</span><span style="color:#177217">巴拉多利德</span></div>
<div class="a" style="left:274px;top:330px;width:90px;height:25px;background:#efefef;"></div>
<div class="a t" style="left:274px;top:331px;width:90px;height:25px;line-height:25px;color:#1c1c1c;"><span style="color:#bf1c1c">1-0</span>(1-0)</div>
<div class="a" style="left:365px;top:330px;width:37px;height:25px;background:#efefef;"></div>
<div class="a t" style="left:365px;top:331px;width:37px;height:25px;line-height:25px;color:#1c1c1c;">1-7</div>
<div class="a" style="left:403px;top:330px;width:105px;height:25px;background:#efefef;"></div>
<div class="a t" style="left:403px;top:331px;width:105px;height:25px;line-height:25px;color:#1c1c1c;">巴伦西亚</div>
<div class="a" style="left:509px;top:330px;width:48px;height:25px;background:#fefaf7;"></div>
<div class="a t" style="left:509px;top:331px;width:48px;height:25px;line-height:25px;color:#1c1c1c;">0.85</div>
<div class="a" style="left:558px;top:330px;width:84px;height:25px;background:#fefaf7;"></div>
<div class="a t" style="left:558px;top:331px;width:84px;height:25px;line-height:25px;color:#1c1c1c;">受平/半</div>
<div class="a" style="left:643px;top:330px;width:51px;height:25px;background:#fefaf7;"></div>
<div class="a t" style="left:643px;top:331px;width:51px;height:25px;line-height:25px;color:#1c1c1c;">1.04</div>
<div class="a" style="left:695px;top:330px;width:70px;height:25px;background:#eff7fb;"></div>
<div class="a t" style="left:695px;top:331px;width:70px;height:25px;line-height:25px;color:#1c1c1c;">3.25</div>
<div class="a" style="left:766px;top:330px;width:56px;height:25px;background:#eff7fb;"></div>
<div class="a t" style="left:766px;top:331px;width:56px;height:25px;line-height:25px;color:#1c1c1c;">3.04</div>
<div class="a" style="left:823px;top:330px;width:72px;height:25px;background:#eff7fb;"></div>
<div class="a t" style="left:823px;top:331px;width:72px;height:25px;line-height:25px;color:#1c1c1c;">2.39</div>
<div class="a" style="left:896px;top:330px;width:37px;height:25px;background:#efefef;"></div>
<div class="a t" style="left:896px;top:331px;width:37px;height:25px;line-height:25px;color:#bf1c1c;">胜</div>
<div class="a" style="left:934px;top:330px;width:38px;height:25px;background:#efefef;"></div>
<div class="a t" style="left:934px;top:331px;width:38px;height:25px;line-height:25px;color:#bf1c1c;">赢</div>
<div class="a" style="left:973px;top:330px;width:57px;height:25px;background:#efefef;"></div>
<div class="a t" style="left:973px;top:331px;width:57px;height:25px;line-height:25px;color:#1f1fa6;">小</div>
<div class="a" style="left:4px;top:355px;width:80px;height:1px;background:#98d2ac;"></div>
<div class="a" style="left:4px;top:356px;width:1027px;height:25px;background:#ffffff;"></div>
<div class="a t" style="left:3px;top:357px;width:1027px;height:25px;line-height:25px;color:#1c1c1c;text-align:center;letter-spacing:0.14px;">近<span style="color:#bf1c1c">10</span>场,胜2平0负8, 胜率:<span style="color:#bf1c1c">20%</span> 让胜率:<span style="color:#bf1c1c">30%</span> 大率:<span style="color:#bf1c1c">60%</span> 单率:<span style="color:#bf1c1c">70%</span></div>
<div class="a" style="left:3px;top:382px;width:1027px;height:25px;background:#dce3ed;"></div>
<div class="a t" style="text-align:left;left:22.5px;top:386px;width:200px;height:25px;line-height:25px;font-size:12px;font-weight:bold;color:#222;">拉斯帕尔马斯</div>
<div class="a t" style="text-align:left;left:436px;top:382px;width:14px;height:25px;line-height:25px;font-size:12px;color:#2a2a2a;padding-top:3px;line-height:22px">近</div>
<div class="a sel" style="left:452px;top:388px;width:36px;height:15px;line-height:15px;font-size:13px;"><span class="sl" style="left:5px;top:0px;font-family:'Liberation Serif',serif;">10</span><svg class="chev" width="10" height="7" viewBox="0 0 10 7" preserveAspectRatio="none" style="right:4px;top:4.0px"><path d="M1 1.2 L5 5.2 L9 1.2" fill="none" stroke="#000" stroke-width="2"/></svg></div>
<div class="a t" style="text-align:left;left:494px;top:382px;width:14px;height:25px;line-height:25px;font-size:12px;color:#2a2a2a;padding-top:3px;line-height:22px">场</div>
<div class="a cb" style="left:510px;top:388px"></div>
<div class="a t" style="text-align:left;left:527px;top:382px;width:30px;height:25px;line-height:25px;font-size:12px;color:#2a2a2a;padding-top:3px;line-height:22px">同客</div>
<div class="a cb on" style="left:554px;top:388px"><svg width="13" height="13" viewBox="0 0 13 13"><path d="M2.6 6.6 L5.2 9.2 L10.4 3.6" fill="none" stroke="#fff" stroke-width="2"/></svg></div>
<div class="a t" style="text-align:left;left:567px;top:382px;width:30px;height:25px;line-height:25px;font-size:12px;color:#2a2a2a;padding-top:3px;line-height:22px">西甲</div>
<div class="a cb on" style="left:591px;top:388px"><svg width="13" height="13" viewBox="0 0 13 13"><path d="M2.6 6.6 L5.2 9.2 L10.4 3.6" fill="none" stroke="#fff" stroke-width="2"/></svg></div>
<div class="a t" style="text-align:left;left:604px;top:382px;width:30px;height:25px;line-height:25px;font-size:12px;color:#2a2a2a;padding-top:3px;line-height:22px">西杯</div>
<div class="a cb on" style="left:628px;top:388px"><svg width="13" height="13" viewBox="0 0 13 13"><path d="M2.6 6.6 L5.2 9.2 L10.4 3.6" fill="none" stroke="#fff" stroke-width="2"/></svg></div>
<div class="a t" style="text-align:left;left:641px;top:382px;width:60px;height:25px;line-height:25px;font-size:12px;color:#2a2a2a;padding-top:3px;line-height:22px">球会友谊</div>
<div class="a" style="left:3px;top:407px;width:1028px;height:326px;background:#c0c0c0;"></div>
<div class="a" style="left:4px;top:408px;width:80px;height:38px;background:#dce3ed;"></div>
<div class="a t" style="left:4px;top:409px;width:80px;height:38px;line-height:38px;color:#1c1c1c;">类型</div>
<div class="a" style="left:85px;top:408px;width:73px;height:38px;background:#dce3ed;"></div>
<div class="a t" style="left:85px;top:409px;width:73px;height:38px;line-height:38px;color:#1c1c1c;">日期</div>
<div class="a" style="left:159px;top:408px;width:120px;height:38px;background:#dce3ed;"></div>
<div class="a t" style="left:159px;top:409px;width:120px;height:38px;line-height:38px;color:#1c1c1c;">主场</div>
<div class="a" style="left:280px;top:408px;width:87px;height:38px;background:#dce3ed;"></div>
<div class="a t" style="left:280px;top:409px;width:87px;height:38px;line-height:38px;color:#1c1c1c;">比分(半场)</div>
<div class="a" style="left:368px;top:408px;width:37px;height:38px;background:#dce3ed;"></div>
<div class="a t" style="left:368px;top:409px;width:37px;height:38px;line-height:38px;color:#1c1c1c;">角球</div>
<div class="a" style="left:406px;top:408px;width:120px;height:38px;background:#dce3ed;"></div>
<div class="a t" style="left:406px;top:409px;width:120px;height:38px;line-height:38px;color:#1c1c1c;">客场</div>
<div class="a" style="left:527px;top:408px;width:178px;height:19px;background:#dce3ed;"></div>
<div class="a" style="left:706px;top:408px;width:193px;height:19px;background:#dce3ed;"></div>
<div class="a" style="left:900px;top:408px;width:130px;height:19px;background:#dce3ed;"></div>
<div class="a sel" style="left:556px;top:408px;width:59px;height:17px;line-height:17px;font-size:13px;"><span class="sl" style="left:5px;top:0px;">Crow*</span><svg class="chev" width="10.6" height="7" viewBox="0 0 10 7" preserveAspectRatio="none" style="right:3.6px;top:5.0px"><path d="M1 1.2 L5 5.2 L9 1.2" fill="none" stroke="#000" stroke-width="2"/></svg></div>
<div class="a sel" style="left:624px;top:408px;width:49px;height:17px;line-height:17px;font-size:13px;"><span class="sl" style="left:3.5px;top:0px;">终指</span><svg class="chev" width="10.6" height="7" viewBox="0 0 10 7" preserveAspectRatio="none" style="right:3.6px;top:5.0px"><path d="M1 1.2 L5 5.2 L9 1.2" fill="none" stroke="#000" stroke-width="2"/></svg></div>
<div class="a sel" style="left:739px;top:408px;width:67px;height:17px;line-height:17px;font-size:13px;"><span class="sl" style="left:3.5px;top:0px;">平均值</span><svg class="chev" width="10.6" height="7" viewBox="0 0 10 7" preserveAspectRatio="none" style="right:3.6px;top:5.0px"><path d="M1 1.2 L5 5.2 L9 1.2" fill="none" stroke="#000" stroke-width="2"/></svg></div>
<div class="a sel" style="left:816px;top:408px;width:48px;height:17px;line-height:17px;font-size:13px;"><span class="sl" style="left:3.5px;top:0px;">终指</span><svg class="chev" width="10.6" height="7" viewBox="0 0 10 7" preserveAspectRatio="none" style="right:3.6px;top:5.0px"><path d="M1 1.2 L5 5.2 L9 1.2" fill="none" stroke="#000" stroke-width="2"/></svg></div>
<div class="a sel" style="left:940px;top:408px;width:48px;height:17px;line-height:17px;font-size:13px;"><span class="sl" style="left:3.5px;top:0px;">全场</span><svg class="chev" width="10.6" height="7" viewBox="0 0 10 7" preserveAspectRatio="none" style="right:3.6px;top:5.0px"><path d="M1 1.2 L5 5.2 L9 1.2" fill="none" stroke="#000" stroke-width="2"/></svg></div>
<div class="a" style="left:527px;top:428px;width:42px;height:18px;background:#dce3ed;"></div>
<div class="a t" style="left:527px;top:429px;width:42px;height:18px;line-height:18px;color:#1c1c1c;">主</div>
<div class="a" style="left:570px;top:428px;width:91px;height:18px;background:#dce3ed;"></div>
<div class="a t" style="left:570px;top:429px;width:91px;height:18px;line-height:18px;color:#1c1c1c;">让球</div>
<div class="a" style="left:662px;top:428px;width:43px;height:18px;background:#dce3ed;"></div>
<div class="a t" style="left:662px;top:429px;width:43px;height:18px;line-height:18px;color:#1c1c1c;">客</div>
<div class="a" style="left:706px;top:428px;width:68px;height:18px;background:#dce3ed;"></div>
<div class="a t" style="left:706px;top:429px;width:68px;height:18px;line-height:18px;color:#1c1c1c;">主</div>
<div class="a" style="left:775px;top:428px;width:54px;height:18px;background:#dce3ed;"></div>
<div class="a t" style="left:775px;top:429px;width:54px;height:18px;line-height:18px;color:#1c1c1c;">和</div>
<div class="a" style="left:830px;top:428px;width:69px;height:18px;background:#dce3ed;"></div>
<div class="a t" style="left:830px;top:429px;width:69px;height:18px;line-height:18px;color:#1c1c1c;">客</div>
<div class="a" style="left:900px;top:428px;width:36px;height:18px;background:#dce3ed;"></div>
<div class="a t" style="left:900px;top:429px;width:36px;height:18px;line-height:18px;color:#1c1c1c;">胜负</div>
<div class="a" style="left:937px;top:428px;width:36px;height:18px;background:#dce3ed;"></div>
<div class="a t" style="left:937px;top:429px;width:36px;height:18px;line-height:18px;color:#1c1c1c;">让球</div>
<div class="a" style="left:974px;top:428px;width:56px;height:18px;background:#dce3ed;"></div>
<div class="a t" style="left:974px;top:429px;width:56px;height:18px;line-height:18px;color:#1c1c1c;">进球数</div>
<div class="a" style="left:4px;top:447px;width:80px;height:25px;background:#006633;"></div>
<div class="a t" style="left:4px;top:448px;width:80px;height:25px;line-height:25px;color:#fff;font-weight:bold;">西甲</div>
<div class="a" style="left:85px;top:447px;width:73px;height:25px;background:#ffffff;"></div>
<div class="a t" style="left:85px;top:448px;width:73px;height:25px;line-height:25px;color:#1c1c1c;">25-02-23</div>
<div class="a" style="left:159px;top:447px;width:120px;height:25px;background:#ffffff;"></div>
<div class="a t" style="left:159px;top:448px;width:120px;height:25px;line-height:25px;color:#1c1c1c;"><span style="color:#177217">拉斯帕尔马斯</span></div>
<div class="a" style="left:280px;top:447px;width:87px;height:25px;background:#ffffff;"></div>
<div class="a t" style="left:280px;top:448px;width:87px;height:25px;line-height:25px;color:#1c1c1c;"><span style="color:#bf1c1c">0-2</span>(0-0)</div>
<div class="a" style="left:368px;top:447px;width:37px;height:25px;background:#ffffff;"></div>
<div class="a t" style="left:368px;top:448px;width:37px;height:25px;line-height:25px;color:#1c1c1c;">5-3</div>
<div class="a" style="left:406px;top:447px;width:120px;height:25px;background:#ffffff;"></div>
<div class="a t" style="left:406px;top:448px;width:120px;height:25px;line-height:25px;color:#1c1c1c;">巴塞罗那</div>
<div class="a" style="left:527px;top:447px;width:42px;height:25px;background:#fefaf7;"></div>
<div class="a t" style="left:527px;top:448px;width:42px;height:25px;line-height:25px;color:#1c1c1c;">0.88</div>
<div class="a" style="left:570px;top:447px;width:91px;height:25px;background:#fefaf7;"></div>
<div class="a t" style="left:570px;top:448px;width:91px;height:25px;line-height:25px;color:#1c1c1c;">受两球</div>
<div class="a" style="left:662px;top:447px;width:43px;height:25px;background:#fefaf7;"></div>
<div class="a t" style="left:662px;top:448px;width:43px;height:25px;line-height:25px;color:#1c1c1c;">1.01</div>
<div class="a" style="left:706px;top:447px;width:68px;height:25px;background:#eff7fb;"></div>
<div class="a t" style="left:706px;top:448px;width:68px;height:25px;line-height:25px;color:#1c1c1c;">10.70</div>
<div class="a" style="left:775px;top:447px;width:54px;height:25px;background:#eff7fb;"></div>
<div class="a t" style="left:775px;top:448px;width:54px;height:25px;line-height:25px;color:#1c1c1c;">6.87</div>
<div class="a" style="left:830px;top:447px;width:69px;height:25px;background:#eff7fb;"></div>
<div class="a t" style="left:830px;top:448px;width:69px;height:25px;line-height:25px;color:#1c1c1c;">1.23</div>
<div class="a" style="left:900px;top:447px;width:36px;height:25px;background:#ffffff;"></div>
<div class="a t" style="left:900px;top:448px;width:36px;height:25px;line-height:25px;color:#1f1fa6;">负</div>
<div class="a" style="left:937px;top:447px;width:36px;height:25px;background:#ffffff;"></div>
<div class="a t" style="left:937px;top:448px;width:36px;height:25px;line-height:25px;color:#1a8a1a;">走</div>
<div class="a" style="left:974px;top:447px;width:56px;height:25px;background:#ffffff;"></div>
<div class="a t" style="left:974px;top:448px;width:56px;height:25px;line-height:25px;color:#1f1fa6;">小</div>
<div class="a" style="left:4px;top:472px;width:80px;height:1px;background:#98d2ac;"></div>
<div class="a" style="left:4px;top:473px;width:80px;height:25px;background:#006633;"></div>
<div class="a t" style="left:4px;top:474px;width:80px;height:25px;line-height:25px;color:#fff;font-weight:bold;">西甲</div>
<div class="a" style="left:85px;top:473px;width:73px;height:25px;background:#efefef;"></div>
<div class="a t" style="left:85px;top:474px;width:73px;height:25px;line-height:25px;color:#1c1c1c;">25-02-17</div>
<div class="a" style="left:159px;top:473px;width:120px;height:25px;background:#efefef;"></div>
<div class="a t" style="left:159px;top:474px;width:120px;height:25px;line-height:25px;color:#1c1c1c;">马洛卡</div>
<div class="a" style="left:280px;top:473px;width:87px;height:25px;background:#efefef;"></div>
<div class="a t" style="left:280px;top:474px;width:87px;height:25px;line-height:25px;color:#1c1c1c;"><span style="color:#bf1c1c">3-1</span>(3-0)</div>
<div class="a" style="left:368px;top:473px;width:37px;height:25px;background:#efefef;"></div>
<div class="a t" style="left:368px;top:474px;width:37px;height:25px;line-height:25px;color:#1c1c1c;">3-5</div>
<div class="a" style="left:406px;top:473px;width:120px;height:25px;background:#efefef;"></div>
<div class="a t" style="left:406px;top:474px;width:120px;height:25px;line-height:25px;color:#1c1c1c;"><span style="color:#177217">拉斯帕尔马斯</span></div>
<div class="a" style="left:527px;top:473px;width:42px;height:25px;background:#fefaf7;"></div>
<div class="a t" style="left:527px;top:474px;width:42px;height:25px;line-height:25px;color:#1c1c1c;">0.82</div>
<div class="a" style="left:570px;top:473px;width:91px;height:25px;background:#fefaf7;"></div>
<div class="a t" style="left:570px;top:474px;width:91px;height:25px;line-height:25px;color:#1c1c1c;">半球</div>
<div class="a" style="left:662px;top:473px;width:43px;height:25px;background:#fefaf7;"></div>
<div class="a t" style="left:662px;top:474px;width:43px;height:25px;line-height:25px;color:#1c1c1c;">1.07</div>
<div class="a" style="left:706px;top:473px;width:68px;height:25px;background:#eff7fb;"></div>
<div class="a t" style="left:706px;top:474px;width:68px;height:25px;line-height:25px;color:#1c1c1c;">1.77</div>
<div class="a" style="left:775px;top:473px;width:54px;height:25px;background:#eff7fb;"></div>
<div class="a t" style="left:775px;top:474px;width:54px;height:25px;line-height:25px;color:#1c1c1c;">3.45</div>
<div class="a" style="left:830px;top:473px;width:69px;height:25px;background:#eff7fb;"></div>
<div class="a t" style="left:830px;top:474px;width:69px;height:25px;line-height:25px;color:#1c1c1c;">5.10</div>
<div class="a" style="left:900px;top:473px;width:36px;height:25px;background:#efefef;"></div>
<div class="a t" style="left:900px;top:474px;width:36px;height:25px;line-height:25px;color:#1f1fa6;">负</div>
<div class="a" style="left:937px;top:473px;width:36px;height:25px;background:#efefef;"></div>
<div class="a t" style="left:937px;top:474px;width:36px;height:25px;line-height:25px;color:#1f1fa6;">输</div>
<div class="a" style="left:974px;top:473px;width:56px;height:25px;background:#efefef;"></div>
<div class="a t" style="left:974px;top:474px;width:56px;height:25px;line-height:25px;color:#bf1c1c;">大</div>
<div class="a" style="left:4px;top:498px;width:80px;height:1px;background:#98d2ac;"></div>
<div class="a" style="left:4px;top:499px;width:80px;height:25px;background:#006633;"></div>
<div class="a t" style="left:4px;top:500px;width:80px;height:25px;line-height:25px;color:#fff;font-weight:bold;">西甲</div>
<div class="a" style="left:85px;top:499px;width:73px;height:25px;background:#ffffff;"></div>
<div class="a t" style="left:85px;top:500px;width:73px;height:25px;line-height:25px;color:#1c1c1c;">25-02-09</div>
<div class="a" style="left:159px;top:499px;width:120px;height:25px;background:#ffffff;"></div>
<div class="a t" style="left:159px;top:500px;width:120px;height:25px;line-height:25px;color:#1c1c1c;"><span style="color:#177217">拉斯帕尔马斯</span></div>
<div class="a" style="left:280px;top:499px;width:87px;height:25px;background:#ffffff;"></div>
<div class="a t" style="left:280px;top:500px;width:87px;height:25px;line-height:25px;color:#1c1c1c;"><span style="color:#bf1c1c">1-2</span>(0-0)</div>
<div class="a" style="left:368px;top:499px;width:37px;height:25px;background:#ffffff;"></div>
<div class="a t" style="left:368px;top:500px;width:37px;height:25px;line-height:25px;color:#1c1c1c;">6-5</div>
<div class="a" style="left:406px;top:499px;width:120px;height:25px;background:#ffffff;"></div>
<div class="a t" style="left:406px;top:500px;width:120px;height:25px;line-height:25px;color:#1c1c1c;">比利亚雷亚尔</div>
<div class="a" style="left:527px;top:499px;width:42px;height:25px;background:#fefaf7;"></div>
<div class="a t" style="left:527px;top:500px;width:42px;height:25px;line-height:25px;color:#1c1c1c;">0.86</div>
<div class="a" style="left:570px;top:499px;width:91px;height:25px;background:#fefaf7;"></div>
<div class="a t" style="left:570px;top:500px;width:91px;height:25px;line-height:25px;color:#1c1c1c;">受一球</div>
<div class="a" style="left:662px;top:499px;width:43px;height:25px;background:#fefaf7;"></div>
<div class="a t" style="left:662px;top:500px;width:43px;height:25px;line-height:25px;color:#1c1c1c;">1.03</div>
<div class="a" style="left:706px;top:499px;width:68px;height:25px;background:#eff7fb;"></div>
<div class="a t" style="left:706px;top:500px;width:68px;height:25px;line-height:25px;color:#1c1c1c;">5.09</div>
<div class="a" style="left:775px;top:499px;width:54px;height:25px;background:#eff7fb;"></div>
<div class="a t" style="left:775px;top:500px;width:54px;height:25px;line-height:25px;color:#1c1c1c;">4.08</div>
<div class="a" style="left:830px;top:499px;width:69px;height:25px;background:#eff7fb;"></div>
<div class="a t" style="left:830px;top:500px;width:69px;height:25px;line-height:25px;color:#1c1c1c;">1.64</div>
<div class="a" style="left:900px;top:499px;width:36px;height:25px;background:#ffffff;"></div>
<div class="a t" style="left:900px;top:500px;width:36px;height:25px;line-height:25px;color:#1f1fa6;">负</div>
<div class="a" style="left:937px;top:499px;width:36px;height:25px;background:#ffffff;"></div>
<div class="a t" style="left:937px;top:500px;width:36px;height:25px;line-height:25px;color:#1a8a1a;">走</div>
<div class="a" style="left:974px;top:499px;width:56px;height:25px;background:#ffffff;"></div>
<div class="a t" style="left:974px;top:500px;width:56px;height:25px;line-height:25px;color:#bf1c1c;">大</div>
<div class="a" style="left:4px;top:524px;width:80px;height:1px;background:#98d2ac;"></div>
<div class="a" style="left:4px;top:525px;width:80px;height:25px;background:#006633;"></div>
<div class="a t" style="left:4px;top:526px;width:80px;height:25px;line-height:25px;color:#fff;font-weight:bold;">西甲</div>
<div class="a" style="left:85px;top:525px;width:73px;height:25px;background:#efefef;"></div>
<div class="a t" style="left:85px;top:526px;width:73px;height:25px;line-height:25px;color:#1c1c1c;">25-02-04</div>
<div class="a" style="left:159px;top:525px;width:120px;height:25px;background:#efefef;"></div>
<div class="a t" style="left:159px;top:526px;width:120px;height:25px;line-height:25px;color:#1c1c1c;">赫罗纳</div>
<div class="a" style="left:280px;top:525px;width:87px;height:25px;background:#efefef;"></div>
<div class="a t" style="left:280px;top:526px;width:87px;height:25px;line-height:25px;color:#1c1c1c;"><span style="color:#bf1c1c">2-1</span>(1-0)</div>
<div class="a" style="left:368px;top:525px;width:37px;height:25px;background:#efefef;"></div>
<div class="a t" style="left:368px;top:526px;width:37px;height:25px;line-height:25px;color:#1c1c1c;">11-3</div>
<div class="a" style="left:406px;top:525px;width:120px;height:25px;background:#efefef;"></div>
<div class="a t" style="left:406px;top:526px;width:120px;height:25px;line-height:25px;color:#1c1c1c;"><span style="color:#177217">拉斯帕尔马斯</span></div>
<div class="a" style="left:527px;top:525px;width:42px;height:25px;background:#fefaf7;"></div>
<div class="a t" style="left:527px;top:526px;width:42px;height:25px;line-height:25px;color:#1c1c1c;">1.04</div>
<div class="a" style="left:570px;top:525px;width:91px;height:25px;background:#fefaf7;"></div>
<div class="a t" style="left:570px;top:526px;width:91px;height:25px;line-height:25px;color:#1c1c1c;">一/球半</div>
<div class="a" style="left:662px;top:525px;width:43px;height:25px;background:#fefaf7;"></div>
<div class="a t" style="left:662px;top:526px;width:43px;height:25px;line-height:25px;color:#1c1c1c;">0.85</div>
<div class="a" style="left:706px;top:525px;width:68px;height:25px;background:#eff7fb;"></div>
<div class="a t" style="left:706px;top:526px;width:68px;height:25px;line-height:25px;color:#1c1c1c;">1.49</div>
<div class="a" style="left:775px;top:525px;width:54px;height:25px;background:#eff7fb;"></div>
<div class="a t" style="left:775px;top:526px;width:54px;height:25px;line-height:25px;color:#1c1c1c;">4.42</div>
<div class="a" style="left:830px;top:525px;width:69px;height:25px;background:#eff7fb;"></div>
<div class="a t" style="left:830px;top:526px;width:69px;height:25px;line-height:25px;color:#1c1c1c;">6.38</div>
<div class="a" style="left:900px;top:525px;width:36px;height:25px;background:#efefef;"></div>
<div class="a t" style="left:900px;top:526px;width:36px;height:25px;line-height:25px;color:#1f1fa6;">负</div>
<div class="a" style="left:937px;top:525px;width:36px;height:25px;background:#efefef;"></div>
<div class="a t" style="left:937px;top:526px;width:36px;height:25px;line-height:25px;color:#bf1c1c;">赢</div>
<div class="a" style="left:974px;top:525px;width:56px;height:25px;background:#efefef;"></div>
<div class="a t" style="left:974px;top:526px;width:56px;height:25px;line-height:25px;color:#bf1c1c;">大</div>
<div class="a" style="left:4px;top:550px;width:80px;height:1px;background:#98d2ac;"></div>
<div class="a" style="left:4px;top:551px;width:80px;height:25px;background:#006633;"></div>
<div class="a t" style="left:4px;top:552px;width:80px;height:25px;line-height:25px;color:#fff;font-weight:bold;">西甲</div>
<div class="a" style="left:85px;top:551px;width:73px;height:25px;background:#ffffff;"></div>
<div class="a t" style="left:85px;top:552px;width:73px;height:25px;line-height:25px;color:#1c1c1c;">25-01-25</div>
<div class="a" style="left:159px;top:551px;width:120px;height:25px;background:#ffffff;"></div>
<div class="a t" style="left:159px;top:552px;width:120px;height:25px;line-height:25px;color:#1c1c1c;"><span class="rc">1</span><span style="color:#177217">拉斯帕尔马斯</span></div>
<div class="a" style="left:280px;top:551px;width:87px;height:25px;background:#ffffff;"></div>
<div class="a t" style="left:280px;top:552px;width:87px;height:25px;line-height:25px;color:#1c1c1c;"><span style="color:#bf1c1c">1-1</span>(0-0)</div>
<div class="a" style="left:368px;top:551px;width:37px;height:25px;background:#ffffff;"></div>
<div class="a t" style="left:368px;top:552px;width:37px;height:25px;line-height:25px;color:#1c1c1c;">4-2</div>
<div class="a" style="left:406px;top:551px;width:120px;height:25px;background:#ffffff;"></div>
<div class="a t" style="left:406px;top:552px;width:120px;height:25px;line-height:25px;color:#1c1c1c;">奥萨苏纳</div>
<div class="a" style="left:527px;top:551px;width:42px;height:25px;background:#fefaf7;"></div>
<div class="a t" style="left:527px;top:552px;width:42px;height:25px;line-height:25px;color:#1c1c1c;">1.12</div>
<div class="a" style="left:570px;top:551px;width:91px;height:25px;background:#fefaf7;"></div>
<div class="a t" style="left:570px;top:552px;width:91px;height:25px;line-height:25px;color:#1c1c1c;">平/半</div>
<div class="a" style="left:662px;top:551px;width:43px;height:25px;background:#fefaf7;"></div>
<div class="a t" style="left:662px;top:552px;width:43px;height:25px;line-height:25px;color:#1c1c1c;">0.78</div>
<div class="a" style="left:706px;top:551px;width:68px;height:25px;background:#eff7fb;"></div>
<div class="a t" style="left:706px;top:552px;width:68px;height:25px;line-height:25px;color:#1c1c1c;">2.45</div>
<div class="a" style="left:775px;top:551px;width:54px;height:25px;background:#eff7fb;"></div>
<div class="a t" style="left:775px;top:552px;width:54px;height:25px;line-height:25px;color:#1c1c1c;">3.14</div>
<div class="a" style="left:830px;top:551px;width:69px;height:25px;background:#eff7fb;"></div>
<div class="a t" style="left:830px;top:552px;width:69px;height:25px;line-height:25px;color:#1c1c1c;">3.05</div>
<div class="a" style="left:900px;top:551px;width:36px;height:25px;background:#ffffff;"></div>
<div class="a t" style="left:900px;top:552px;width:36px;height:25px;line-height:25px;color:#1a8a1a;">平</div>
<div class="a" style="left:937px;top:551px;width:36px;height:25px;background:#ffffff;"></div>
<div class="a t" style="left:937px;top:552px;width:36px;height:25px;line-height:25px;color:#1f1fa6;">输</div>
<div class="a" style="left:974px;top:551px;width:56px;height:25px;background:#ffffff;"></div>
<div class="a t" style="left:974px;top:552px;width:56px;height:25px;line-height:25px;color:#1f1fa6;">小</div>
<div class="a" style="left:4px;top:576px;width:80px;height:1px;background:#98d2ac;"></div>
<div class="a" style="left:4px;top:577px;width:80px;height:25px;background:#006633;"></div>
<div class="a t" style="left:4px;top:578px;width:80px;height:25px;line-height:25px;color:#fff;font-weight:bold;">西甲</div>
<div class="a" style="left:85px;top:577px;width:73px;height:25px;background:#efefef;"></div>
<div class="a t" style="left:85px;top:578px;width:73px;height:25px;line-height:25px;color:#1c1c1c;">25-01-19</div>
<div class="a" style="left:159px;top:577px;width:120px;height:25px;background:#efefef;"></div>
<div class="a t" style="left:159px;top:578px;width:120px;height:25px;line-height:25px;color:#1c1c1c;">皇家马德里</div>
<div class="a" style="left:280px;top:577px;width:87px;height:25px;background:#efefef;"></div>
<div class="a t" style="left:280px;top:578px;width:87px;height:25px;line-height:25px;color:#1c1c1c;"><span style="color:#bf1c1c">4-1</span>(3-1)</div>
<div class="a" style="left:368px;top:577px;width:37px;height:25px;background:#efefef;"></div>
<div class="a t" style="left:368px;top:578px;width:37px;height:25px;line-height:25px;color:#1c1c1c;">8-2</div>
<div class="a" style="left:406px;top:577px;width:120px;height:25px;background:#efefef;"></div>
<div class="a t" style="left:406px;top:578px;width:120px;height:25px;line-height:25px;color:#1c1c1c;"><span style="color:#177217">拉斯帕尔马斯</span><span class="rc">1</span></div>
<div class="a" style="left:527px;top:577px;width:42px;height:25px;background:#fefaf7;"></div>
<div class="a t" style="left:527px;top:578px;width:42px;height:25px;line-height:25px;color:#1c1c1c;">1.06</div>
<div class="a" style="left:570px;top:577px;width:91px;height:25px;background:#fefaf7;"></div>
<div class="a t" style="left:570px;top:578px;width:91px;height:25px;line-height:25px;color:#1c1c1c;">两/两球半</div>
<div class="a" style="left:662px;top:577px;width:43px;height:25px;background:#fefaf7;"></div>
<div class="a t" style="left:662px;top:578px;width:43px;height:25px;line-height:25px;color:#1c1c1c;">0.83</div>
<div class="a" style="left:706px;top:577px;width:68px;height:25px;background:#eff7fb;"></div>
<div class="a t" style="left:706px;top:578px;width:68px;height:25px;line-height:25px;color:#1c1c1c;">1.16</div>
<div class="a" style="left:775px;top:577px;width:54px;height:25px;background:#eff7fb;"></div>
<div class="a t" style="left:775px;top:578px;width:54px;height:25px;line-height:25px;color:#1c1c1c;">7.99</div>
<div class="a" style="left:830px;top:577px;width:69px;height:25px;background:#eff7fb;"></div>
<div class="a t" style="left:830px;top:578px;width:69px;height:25px;line-height:25px;color:#1c1c1c;">15.99</div>
<div class="a" style="left:900px;top:577px;width:36px;height:25px;background:#efefef;"></div>
<div class="a t" style="left:900px;top:578px;width:36px;height:25px;line-height:25px;color:#1f1fa6;">负</div>
<div class="a" style="left:937px;top:577px;width:36px;height:25px;background:#efefef;"></div>
<div class="a t" style="left:937px;top:578px;width:36px;height:25px;line-height:25px;color:#1f1fa6;">输</div>
<div class="a" style="left:974px;top:577px;width:56px;height:25px;background:#efefef;"></div>
<div class="a t" style="left:974px;top:578px;width:56px;height:25px;line-height:25px;color:#bf1c1c;">大</div>
<div class="a" style="left:4px;top:602px;width:80px;height:1px;background:#98d2ac;"></div>
<div class="a" style="left:4px;top:603px;width:80px;height:25px;background:#006633;"></div>
<div class="a t" style="left:4px;top:604px;width:80px;height:25px;line-height:25px;color:#fff;font-weight:bold;">西甲</div>
<div class="a" style="left:85px;top:603px;width:73px;height:25px;background:#ffffff;"></div>
<div class="a t" style="left:85px;top:604px;width:73px;height:25px;line-height:25px;color:#1c1c1c;">25-01-12</div>
<div class="a" style="left:159px;top:603px;width:120px;height:25px;background:#ffffff;"></div>
<div class="a t" style="left:159px;top:604px;width:120px;height:25px;line-height:25px;color:#1c1c1c;"><span style="color:#177217">拉斯帕尔马斯</span></div>
<div class="a" style="left:280px;top:603px;width:87px;height:25px;background:#ffffff;"></div>
<div class="a t" style="left:280px;top:604px;width:87px;height:25px;line-height:25px;color:#1c1c1c;"><span style="color:#bf1c1c">1-2</span>(0-0)</div>
<div class="a" style="left:368px;top:603px;width:37px;height:25px;background:#ffffff;"></div>
<div class="a t" style="left:368px;top:604px;width:37px;height:25px;line-height:25px;color:#1c1c1c;">4-5</div>
<div class="a" style="left:406px;top:603px;width:120px;height:25px;background:#ffffff;"></div>
<div class="a t" style="left:406px;top:604px;width:120px;height:25px;line-height:25px;color:#1c1c1c;">赫塔菲</div>
<div class="a" style="left:527px;top:603px;width:42px;height:25px;background:#fefaf7;"></div>
<div class="a t" style="left:527px;top:604px;width:42px;height:25px;line-height:25px;color:#1c1c1c;">1.11</div>
<div class="a" style="left:570px;top:603px;width:91px;height:25px;background:#fefaf7;"></div>
<div class="a t" style="left:570px;top:604px;width:91px;height:25px;line-height:25px;color:#1c1c1c;">平/半</div>
<div class="a" style="left:662px;top:603px;width:43px;height:25px;background:#fefaf7;"></div>
<div class="a t" style="left:662px;top:604px;width:43px;height:25px;line-height:25px;color:#1c1c1c;">0.79</div>
<div class="a" style="left:706px;top:603px;width:68px;height:25px;background:#eff7fb;"></div>
<div class="a t" style="left:706px;top:604px;width:68px;height:25px;line-height:25px;color:#1c1c1c;">2.48</div>
<div class="a" style="left:775px;top:603px;width:54px;height:25px;background:#eff7fb;"></div>
<div class="a t" style="left:775px;top:604px;width:54px;height:25px;line-height:25px;color:#1c1c1c;">2.79</div>
<div class="a" style="left:830px;top:603px;width:69px;height:25px;background:#eff7fb;"></div>
<div class="a t" style="left:830px;top:604px;width:69px;height:25px;line-height:25px;color:#1c1c1c;">3.44</div>
<div class="a" style="left:900px;top:603px;width:36px;height:25px;background:#ffffff;"></div>
<div class="a t" style="left:900px;top:604px;width:36px;height:25px;line-height:25px;color:#1f1fa6;">负</div>
<div class="a" style="left:937px;top:603px;width:36px;height:25px;background:#ffffff;"></div>
<div class="a t" style="left:937px;top:604px;width:36px;height:25px;line-height:25px;color:#1f1fa6;">输</div>
<div class="a" style="left:974px;top:603px;width:56px;height:25px;background:#ffffff;"></div>
<div class="a t" style="left:974px;top:604px;width:56px;height:25px;line-height:25px;color:#bf1c1c;">大</div>
<div class="a" style="left:4px;top:628px;width:80px;height:1px;background:#98d2ac;"></div>
<div class="a" style="left:4px;top:629px;width:80px;height:25px;background:#006666;"></div>
<div class="a t" style="left:4px;top:630px;width:80px;height:25px;line-height:25px;color:#fff;font-weight:bold;">西杯</div>
<div class="a" style="left:85px;top:629px;width:73px;height:25px;background:#efefef;"></div>
<div class="a t" style="left:85px;top:630px;width:73px;height:25px;line-height:25px;color:#1c1c1c;">25-01-05</div>
<div class="a" style="left:159px;top:629px;width:120px;height:25px;background:#efefef;"></div>
<div class="a t" style="left:159px;top:630px;width:120px;height:25px;line-height:25px;color:#1c1c1c;">艾尔切</div>
<div class="a" style="left:280px;top:629px;width:87px;height:25px;background:#efefef;"></div>
<div class="a t" style="left:280px;top:630px;width:87px;height:25px;line-height:25px;color:#1c1c1c;"><span style="color:#bf1c1c">4-0</span>(1-0)</div>
<div class="a" style="left:368px;top:629px;width:37px;height:25px;background:#efefef;"></div>
<div class="a t" style="left:368px;top:630px;width:37px;height:25px;line-height:25px;color:#1c1c1c;">3-4</div>
<div class="a" style="left:406px;top:629px;width:120px;height:25px;background:#efefef;"></div>
<div class="a t" style="left:406px;top:630px;width:120px;height:25px;line-height:25px;color:#1c1c1c;"><span style="color:#177217">拉斯帕尔马斯</span></div>
<div class="a" style="left:527px;top:629px;width:42px;height:25px;background:#fefaf7;"></div>
<div class="a t" style="left:527px;top:630px;width:42px;height:25px;line-height:25px;color:#1c1c1c;">0.99</div>
<div class="a" style="left:570px;top:629px;width:91px;height:25px;background:#fefaf7;"></div>
<div class="a t" style="left:570px;top:630px;width:91px;height:25px;line-height:25px;color:#1c1c1c;">半球</div>
<div class="a" style="left:662px;top:629px;width:43px;height:25px;background:#fefaf7;"></div>
<div class="a t" style="left:662px;top:630px;width:43px;height:25px;line-height:25px;color:#1c1c1c;">0.90</div>
<div class="a" style="left:706px;top:629px;width:68px;height:25px;background:#eff7fb;"></div>
<div class="a t" style="left:706px;top:630px;width:68px;height:25px;line-height:25px;color:#1c1c1c;">2.02</div>
<div class="a" style="left:775px;top:629px;width:54px;height:25px;background:#eff7fb;"></div>
<div class="a t" style="left:775px;top:630px;width:54px;height:25px;line-height:25px;color:#1c1c1c;">3.26</div>
<div class="a" style="left:830px;top:629px;width:69px;height:25px;background:#eff7fb;"></div>
<div class="a t" style="left:830px;top:630px;width:69px;height:25px;line-height:25px;color:#1c1c1c;">3.71</div>
<div class="a" style="left:900px;top:629px;width:36px;height:25px;background:#efefef;"></div>
<div class="a t" style="left:900px;top:630px;width:36px;height:25px;line-height:25px;color:#1f1fa6;">负</div>
<div class="a" style="left:937px;top:629px;width:36px;height:25px;background:#efefef;"></div>
<div class="a t" style="left:937px;top:630px;width:36px;height:25px;line-height:25px;color:#1f1fa6;">输</div>
<div class="a" style="left:974px;top:629px;width:56px;height:25px;background:#efefef;"></div>
<div class="a t" style="left:974px;top:630px;width:56px;height:25px;line-height:25px;color:#bf1c1c;">大</div>
<div class="a" style="left:4px;top:654px;width:80px;height:1px;background:#98d2ac;"></div>
<div class="a" style="left:4px;top:655px;width:80px;height:25px;background:#006633;"></div>
<div class="a t" style="left:4px;top:656px;width:80px;height:25px;line-height:25px;color:#fff;font-weight:bold;">西甲</div>
<div class="a" style="left:85px;top:655px;width:73px;height:25px;background:#ffffff;"></div>
<div class="a t" style="left:85px;top:656px;width:73px;height:25px;line-height:25px;color:#1c1c1c;">24-12-23</div>
<div class="a" style="left:159px;top:655px;width:120px;height:25px;background:#ffffff;"></div>
<div class="a t" style="left:159px;top:656px;width:120px;height:25px;line-height:25px;color:#1c1c1c;"><span style="color:#177217">拉斯帕尔马斯</span></div>
<div class="a" style="left:280px;top:655px;width:87px;height:25px;background:#ffffff;"></div>
<div class="a t" style="left:280px;top:656px;width:87px;height:25px;line-height:25px;color:#1c1c1c;"><span style="color:#bf1c1c">1-0</span>(0-0)</div>
<div class="a" style="left:368px;top:655px;width:37px;height:25px;background:#ffffff;"></div>
<div class="a t" style="left:368px;top:656px;width:37px;height:25px;line-height:25px;color:#1c1c1c;">2-2</div>
<div class="a" style="left:406px;top:655px;width:120px;height:25px;background:#ffffff;"></div>
<div class="a t" style="left:406px;top:656px;width:120px;height:25px;line-height:25px;color:#1c1c1c;">西班牙人</div>
<div class="a" style="left:527px;top:655px;width:42px;height:25px;background:#fefaf7;"></div>
<div class="a t" style="left:527px;top:656px;width:42px;height:25px;line-height:25px;color:#1c1c1c;">1.12</div>
<div class="a" style="left:570px;top:655px;width:91px;height:25px;background:#fefaf7;"></div>
<div class="a t" style="left:570px;top:656px;width:91px;height:25px;line-height:25px;color:#1c1c1c;">半球</div>
<div class="a" style="left:662px;top:655px;width:43px;height:25px;background:#fefaf7;"></div>
<div class="a t" style="left:662px;top:656px;width:43px;height:25px;line-height:25px;color:#1c1c1c;">0.78</div>
<div class="a" style="left:706px;top:655px;width:68px;height:25px;background:#eff7fb;"></div>
<div class="a t" style="left:706px;top:656px;width:68px;height:25px;line-height:25px;color:#1c1c1c;">2.06</div>
<div class="a" style="left:775px;top:655px;width:54px;height:25px;background:#eff7fb;"></div>
<div class="a t" style="left:775px;top:656px;width:54px;height:25px;line-height:25px;color:#1c1c1c;">3.25</div>
<div class="a" style="left:830px;top:655px;width:69px;height:25px;background:#eff7fb;"></div>
<div class="a t" style="left:830px;top:656px;width:69px;height:25px;line-height:25px;color:#1c1c1c;">3.83</div>
<div class="a" style="left:900px;top:655px;width:36px;height:25px;background:#ffffff;"></div>
<div class="a t" style="left:900px;top:656px;width:36px;height:25px;line-height:25px;color:#bf1c1c;">胜</div>
<div class="a" style="left:937px;top:655px;width:36px;height:25px;background:#ffffff;"></div>
<div class="a t" style="left:937px;top:656px;width:36px;height:25px;line-height:25px;color:#bf1c1c;">赢</div>
<div class="a" style="left:974px;top:655px;width:56px;height:25px;background:#ffffff;"></div>
<div class="a t" style="left:974px;top:656px;width:56px;height:25px;line-height:25px;color:#1f1fa6;">小</div>
<div class="a" style="left:4px;top:680px;width:80px;height:1px;background:#98d2ac;"></div>
<div class="a" style="left:4px;top:681px;width:80px;height:25px;background:#006633;"></div>
<div class="a t" style="left:4px;top:682px;width:80px;height:25px;line-height:25px;color:#fff;font-weight:bold;">西甲</div>
<div class="a" style="left:85px;top:681px;width:73px;height:25px;background:#efefef;"></div>
<div class="a t" style="left:85px;top:682px;width:73px;height:25px;line-height:25px;color:#1c1c1c;">24-12-16</div>
<div class="a" style="left:159px;top:681px;width:120px;height:25px;background:#efefef;"></div>
<div class="a t" style="left:159px;top:682px;width:120px;height:25px;line-height:25px;color:#1c1c1c;">皇家社会</div>
<div class="a" style="left:280px;top:681px;width:87px;height:25px;background:#efefef;"></div>
<div class="a t" style="left:280px;top:682px;width:87px;height:25px;line-height:25px;color:#1c1c1c;"><span style="color:#bf1c1c">0-0</span>(0-0)</div>
<div class="a" style="left:368px;top:681px;width:37px;height:25px;background:#efefef;"></div>
<div class="a t" style="left:368px;top:682px;width:37px;height:25px;line-height:25px;color:#1c1c1c;">8-6</div>
<div class="a" style="left:406px;top:681px;width:120px;height:25px;background:#efefef;"></div>
<div class="a t" style="left:406px;top:682px;width:120px;height:25px;line-height:25px;color:#1c1c1c;"><span style="color:#177217">拉斯帕尔马斯</span></div>
<div class="a" style="left:527px;top:681px;width:42px;height:25px;background:#fefaf7;"></div>
<div class="a t" style="left:527px;top:682px;width:42px;height:25px;line-height:25px;color:#1c1c1c;">1.02</div>
<div class="a" style="left:570px;top:681px;width:91px;height:25px;background:#fefaf7;"></div>
<div class="a t" style="left:570px;top:682px;width:91px;height:25px;line-height:25px;color:#1c1c1c;">球半</div>
<div class="a" style="left:662px;top:681px;width:43px;height:25px;background:#fefaf7;"></div>
<div class="a t" style="left:662px;top:682px;width:43px;height:25px;line-height:25px;color:#1c1c1c;">0.87</div>
<div class="a" style="left:706px;top:681px;width:68px;height:25px;background:#eff7fb;"></div>
<div class="a t" style="left:706px;top:682px;width:68px;height:25px;line-height:25px;color:#1c1c1c;">1.34</div>
<div class="a" style="left:775px;top:681px;width:54px;height:25px;background:#eff7fb;"></div>
<div class="a t" style="left:775px;top:682px;width:54px;height:25px;line-height:25px;color:#1c1c1c;">4.80</div>
<div class="a" style="left:830px;top:681px;width:69px;height:25px;background:#eff7fb;"></div>
<div class="a t" style="left:830px;top:682px;width:69px;height:25px;line-height:25px;color:#1c1c1c;">10.18</div>
<div class="a" style="left:900px;top:681px;width:36px;height:25px;background:#efefef;"></div>
<div class="a t" style="left:900px;top:682px;width:36px;height:25px;line-height:25px;color:#1a8a1a;">平</div>
<div class="a" style="left:937px;top:681px;width:36px;height:25px;background:#efefef;"></div>
<div class="a t" style="left:937px;top:682px;width:36px;height:25px;line-height:25px;color:#bf1c1c;">赢</div>
<div class="a" style="left:974px;top:681px;width:56px;height:25px;background:#efefef;"></div>
<div class="a t" style="left:974px;top:682px;width:56px;height:25px;line-height:25px;color:#1f1fa6;">小</div>
<div class="a" style="left:4px;top:706px;width:80px;height:1px;background:#98d2ac;"></div>
<div class="a" style="left:4px;top:707px;width:1027px;height:25px;background:#ffffff;"></div>
<div class="a t" style="left:3px;top:708px;width:1027px;height:25px;line-height:25px;color:#1c1c1c;text-align:center;letter-spacing:0.14px;">近<span style="color:#bf1c1c">10</span>场,胜1平2负7, 胜率:<span style="color:#bf1c1c">10%</span> 让胜率:<span style="color:#bf1c1c">30%</span> 大率:<span style="color:#bf1c1c">60%</span> 单率:<span style="color:#bf1c1c">50%</span></div></body></html>
